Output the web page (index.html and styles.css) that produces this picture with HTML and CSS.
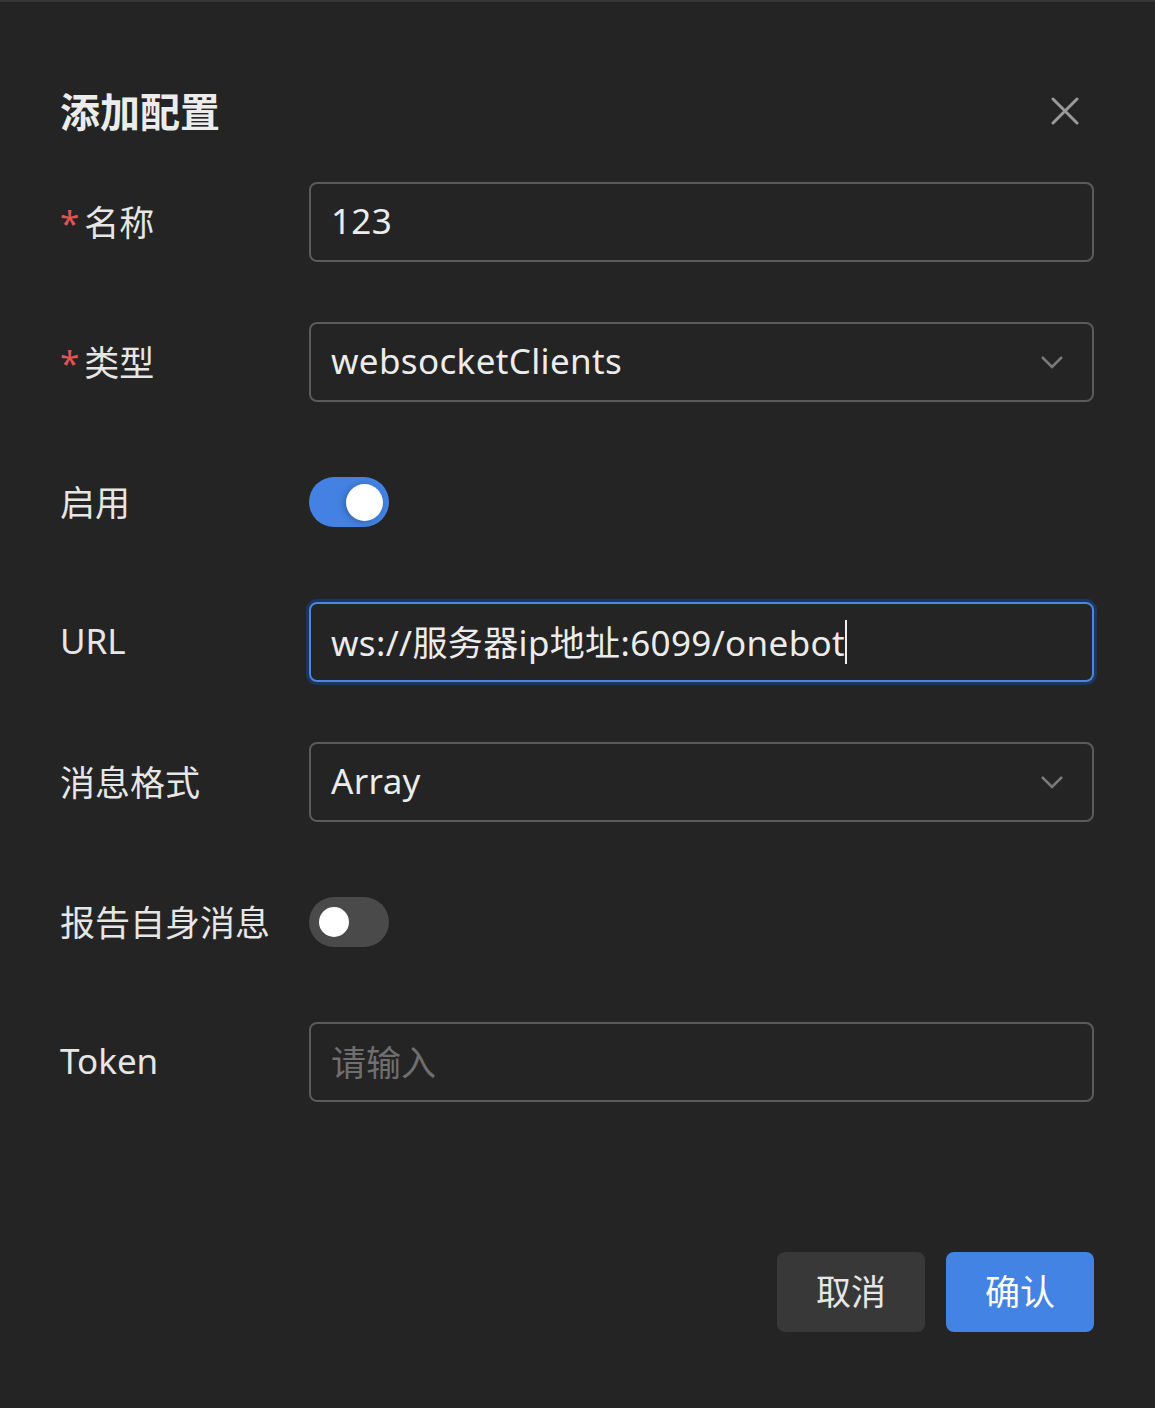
FILE: index.html
```html
<!DOCTYPE html>
<html lang="zh-CN">
<head>
    <meta charset="UTF-8">
    <meta name="viewport" content="width=device-width, initial-scale=1.0">
    <title>添加配置</title>
    <link rel="stylesheet" href="styles.css">
</head>
<body>
    <div class="dialog">
        <div class="dialog-header">
            <span class="dialog-title">添加配置</span>
            <button class="close-btn" aria-label="close">
                <svg width="28" height="28" viewBox="0 0 28 28"><path d="M2 2 L26 26 M26 2 L2 26" stroke="#9a9a9a" stroke-width="3" stroke-linecap="round"/></svg>
            </button>
        </div>

        <div class="form">
            <div class="form-row">
                <label class="form-label"><span class="required">*</span>名称</label>
                <div class="input"><span class="value">123</span></div>
            </div>
            <div class="form-row">
                <label class="form-label"><span class="required">*</span>类型</label>
                <div class="input select">
                    <span class="value">websocketClients</span>
                    <svg class="arrow" width="24" height="14" viewBox="0 0 24 14"><path d="M2 2 L12 12 L22 2" fill="none" stroke="#7a7a7a" stroke-width="2.5"/></svg>
                </div>
            </div>
            <div class="form-row">
                <label class="form-label">启用</label>
                <div class="switch on"><span class="knob"></span></div>
            </div>
            <div class="form-row">
                <label class="form-label">URL</label>
                <div class="input focused"><span class="value">ws://服务器ip地址:6099/onebot</span><span class="caret"></span></div>
            </div>
            <div class="form-row">
                <label class="form-label">消息格式</label>
                <div class="input select">
                    <span class="value">Array</span>
                    <svg class="arrow" width="24" height="14" viewBox="0 0 24 14"><path d="M2 2 L12 12 L22 2" fill="none" stroke="#7a7a7a" stroke-width="2.5"/></svg>
                </div>
            </div>
            <div class="form-row">
                <label class="form-label">报告自身消息</label>
                <div class="switch"><span class="knob"></span></div>
            </div>
            <div class="form-row">
                <label class="form-label">Token</label>
                <div class="input"><span class="placeholder">请输入</span></div>
            </div>
        </div>

        <div class="dialog-footer">
            <button class="btn btn-cancel">取消</button>
            <button class="btn btn-primary">确认</button>
        </div>
    </div>
</body>
</html>
```

FILE: styles.css
```css
body {
    margin: 0;
    background: #242424;
    font-family: "Noto Sans", "Noto Sans CJK SC", sans-serif;
    color: #e6e6e6;
}
.dialog {
    height: 1408px;
    box-sizing: border-box;
    border-top: 2px solid #363636;
    padding: 0 61px 0 60px;
}
.dialog-header {
    display: flex;
    justify-content: space-between;
    align-items: center;
    height: 180px;
    padding-top: 44px;
    box-sizing: border-box;
}
.dialog-title {
    font-size: 40px;
    font-weight: 700;
    font-family: "Noto Sans CJK SC", sans-serif;
    color: #ececec;
    margin-top: -8px;
}
.close-btn {
    background: none;
    border: none;
    padding: 0;
    margin-right: 15px;
    margin-top: -6px;
    display: flex;
}
.form {
    display: flex;
    flex-direction: column;
    gap: 60px;
}
.form-row {
    display: flex;
    align-items: center;
    height: 80px;
}
.form-label {
    width: 249px;
    flex: none;
    font-size: 35px;
    font-family: "Noto Sans", "Noto Sans CJK SC", sans-serif;
    color: #e6e6e6;
    padding-bottom: 4px;
}
.required {
    color: #e05454;
    margin-right: 5px;
}
.input {
    flex: 1;
    height: 80px;
    box-sizing: border-box;
    border: 2px solid #5b5b5b;
    border-radius: 8px;
    display: flex;
    align-items: center;
    padding: 0 28px 4px 20px;
    font-size: 35px;
    color: #ececec;
}
.input .value {
    white-space: nowrap;
    letter-spacing: 0.35px;
}
.select {
    justify-content: space-between;
}
.select .arrow {
    margin-top: 4px;
}
.focused {
    border-color: #4a86e2;
    box-shadow: 0 0 0 3px #1d365e;
}
.caret {
    width: 2px;
    height: 44px;
    background: #f0f0f0;
    margin-top: 4px;
}
.placeholder {
    color: #6f6f6f;
}
.switch {
    width: 80px;
    height: 50px;
    border-radius: 25px;
    background: #4a4a4a;
    display: flex;
    align-items: center;
    padding: 0 10px;
    box-sizing: border-box;
}
.switch .knob {
    width: 30px;
    height: 30px;
    border-radius: 50%;
    background: #fff;
}
.switch.on {
    background: #4382e3;
    justify-content: flex-end;
    padding: 0 6px;
}
.switch.on .knob {
    width: 37px;
    height: 37px;
    box-shadow: -2px 1px 6px rgba(0, 0, 0, 0.25);
}
.dialog-footer {
    display: flex;
    justify-content: flex-end;
    gap: 21px;
    margin-top: 150px;
}
.btn {
    width: 148px;
    height: 80px;
    border: none;
    border-radius: 8px;
    font-size: 35px;
    font-family: "Noto Sans CJK SC", sans-serif;
    padding-bottom: 6px;
    cursor: pointer;
}
.btn-cancel {
    background: #383838;
    color: #e6e6e6;
}
.btn-primary {
    background: #4383e4;
    color: #fff;
}
```
